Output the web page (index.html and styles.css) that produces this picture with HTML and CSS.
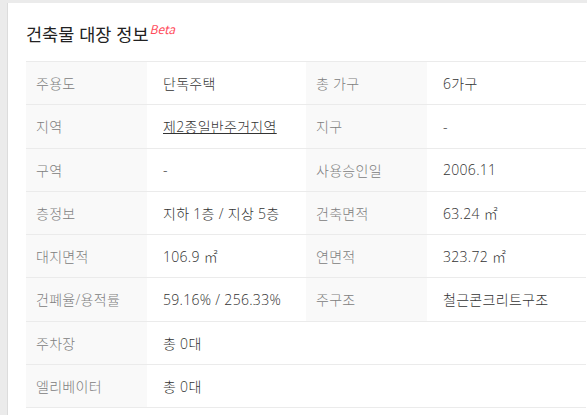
FILE: index.html
```html
<!DOCTYPE html>
<html lang="ko">
<head>
    <meta charset="UTF-8">
    <title>건축물 대장 정보</title>
    <link rel="stylesheet" href="styles.css">
</head>
<body>
<div class="card">
    <h2 class="title">건축물 대장 정보<sup class="beta">Beta</sup></h2>
    <table class="info">
        <tr>
            <th>주용도</th>
            <td>단독주택</td>
            <th>총 가구</th>
            <td>6가구</td>
        </tr>
        <tr>
            <th>지역</th>
            <td><a href="#" class="link">제2종일반주거지역</a></td>
            <th>지구</th>
            <td>-</td>
        </tr>
        <tr>
            <th>구역</th>
            <td>-</td>
            <th>사용승인일</th>
            <td>2006.11</td>
        </tr>
        <tr>
            <th>층정보</th>
            <td>지하 1층 / 지상 5층</td>
            <th>건축면적</th>
            <td>63.24 ㎡</td>
        </tr>
        <tr>
            <th>대지면적</th>
            <td>106.9 ㎡</td>
            <th>연면적</th>
            <td>323.72 ㎡</td>
        </tr>
        <tr>
            <th>건폐율/용적률</th>
            <td>59.16% / 256.33%</td>
            <th>주구조</th>
            <td>철근콘크리트구조</td>
        </tr>
        <tr>
            <th>주차장</th>
            <td colspan="3">총 0대</td>
        </tr>
        <tr>
            <th>엘리베이터</th>
            <td colspan="3">총 0대</td>
        </tr>
    </table>
</div>
</body>
</html>
```

FILE: styles.css
```css
*{
    padding: 0;
    margin: 0;
    box-sizing: border-box;
}
body{
    background: #ebebeb;
    font-family: "Noto Sans CJK KR", "Noto Sans", sans-serif;
    color: #333;
    overflow: hidden;
}
.card{
    margin: 3px 0 0 7px;
    border-left: 1px solid #dcdcdc;
    background: #fff;
    padding: 19px 0 0 18px;
    height: 420px;
}
.title{
    font-size: 17.5px;
    font-weight: 400;
    line-height: 24px;
    color: #222;
    margin-bottom: 15px;
}
.beta{
    font-size: 12px;
    font-style: italic;
    font-weight: 400;
    color: #ff4b5c;
    margin-left: 1px;
    vertical-align: 7px;
    line-height: 1;
}
.info{
    border-collapse: collapse;
    width: 560px;
    table-layout: fixed;
    font-family: "Open Sans", "Noto Sans CJK KR", sans-serif;
    font-size: 14px;
}
.info th, .info td{
    height: 43.25px;
    border-top: 1px solid #ebebeb;
    border-bottom: 1px solid #ebebeb;
    text-align: left;
    font-weight: 300;
    letter-spacing: 0.3px;
}
.info th{
    width: 121px;
    background: #f9f9f9;
    color: #808080;
    padding-left: 10px;
}
.info td{
    width: 159px;
    padding-left: 16px;
    color: #333;
}
.link{
    color: #333;
    text-decoration: underline;
}
```
